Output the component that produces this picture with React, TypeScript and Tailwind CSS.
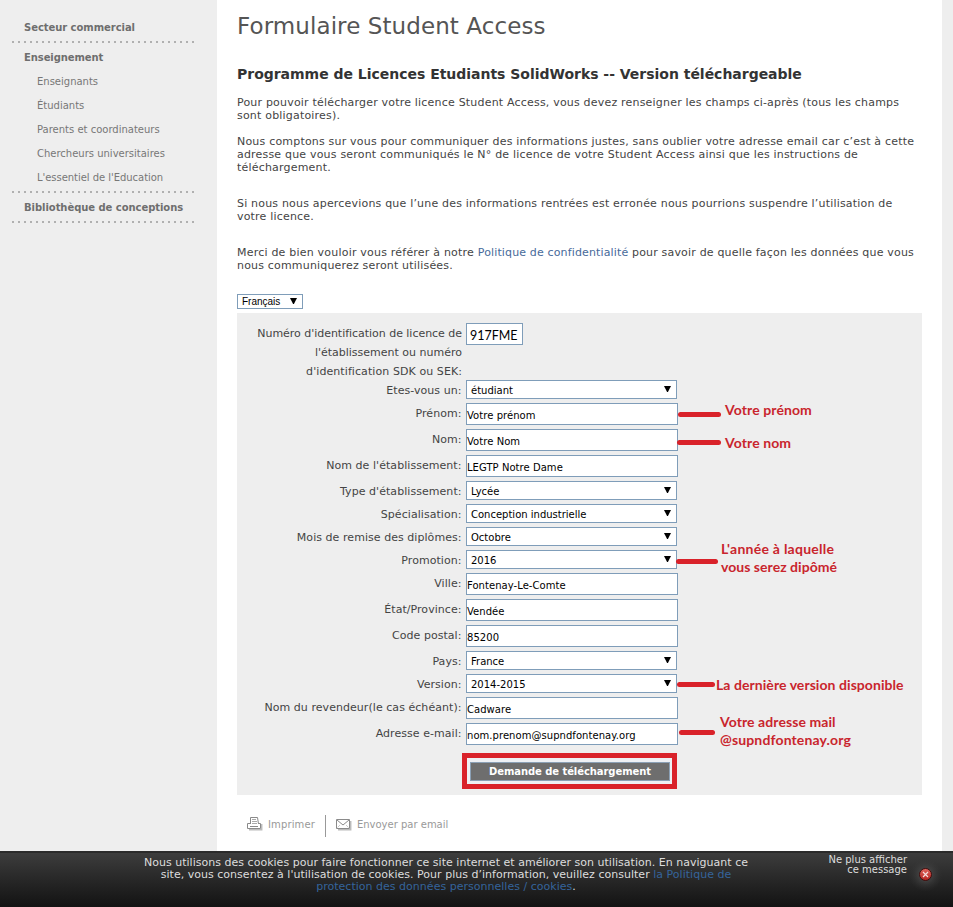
import type { ReactNode } from "react";

type Field = { label: string; value: string; kind: "select" | "input" };

const fields: Field[] = [
  { label: "Etes-vous un:", value: "étudiant", kind: "select" },
  { label: "Prénom:", value: "Votre prénom", kind: "input" },
  { label: "Nom:", value: "Votre Nom", kind: "input" },
  { label: "Nom de l'établissement:", value: "LEGTP Notre Dame", kind: "input" },
  { label: "Type d'établissement:", value: "Lycée", kind: "select" },
  { label: "Spécialisation:", value: "Conception industrielle", kind: "select" },
  { label: "Mois de remise des diplômes:", value: "Octobre", kind: "select" },
  { label: "Promotion:", value: "2016", kind: "select" },
  { label: "Ville:", value: "Fontenay-Le-Comte", kind: "input" },
  { label: "État/Province:", value: "Vendée", kind: "input" },
  { label: "Code postal:", value: "85200", kind: "input" },
  { label: "Pays:", value: "France", kind: "select" },
  { label: "Version:", value: "2014-2015", kind: "select" },
  { label: "Nom du revendeur(le cas échéant):", value: "Cadware", kind: "input" },
  { label: "Adresse e-mail:", value: "nom.prenom@supndfontenay.org", kind: "input" },
];

function Arrow() {
  return (
    <svg width="7" height="6" viewBox="0 0 7 6" className="shrink-0">
      <path d="M0 0h7L3.9 6h-.8z" fill="#000" />
    </svg>
  );
}

function Dots() {
  return (
    <svg width="184" height="2" className="ml-[11px] block">
      <line x1="1" y1="1" x2="184" y2="1" stroke="#b0b0b0" strokeWidth="2" strokeDasharray="2 4" />
    </svg>
  );
}

function Row({ label, value, kind }: Field) {
  return (
    <div className="mb-1 flex items-start">
      <div className="h-[19px] w-[225px] pt-px pr-[0.5px] text-right text-[11px] leading-[19px] tracking-[0.05px] whitespace-nowrap text-[#444]">
        {label}
      </div>
      {kind === "select" ? (
        <div className="ml-1 flex h-[19px] w-[211px] justify-between border border-[#7f9db9] bg-white pr-[5px] pl-1 text-[10px] leading-[19px] text-black">
          <span>{value}</span>
          <span className="pt-[5px] leading-none">
            <Arrow />
          </span>
        </div>
      ) : (
        <div className="ml-1 h-[22px] w-[212px] border border-[#7f9db9] bg-white pt-[2px] text-[10px] leading-[20px] tracking-[0.05px] whitespace-nowrap text-black">
          {value}
        </div>
      )}
    </div>
  );
}

/* Red marker line with its caption, laid over the form. */
function Note({ line, text, children }: { line: string; text: string; children: ReactNode }) {
  return (
    <>
      <div className={"absolute h-[5px] rounded-full bg-[#d9222a] " + line} />
      <div
        className={
          "absolute font-['Lato',sans-serif] text-[14px] leading-[18px] font-bold whitespace-nowrap text-[#c9252d] " + text
        }
      >
        {children}
      </div>
    </>
  );
}

export default function App() {
  return (
    <div className="flex h-[907px] w-[953px] flex-col overflow-hidden bg-[#eee] font-['DejaVu_Sans','Verdana',sans-serif]">
      <div className="flex h-[851px]">
        <nav className="w-[217px] text-[10px] leading-6 whitespace-nowrap text-[#777]">
          <div className="mt-[16px] ml-[24px] h-[25px] font-bold tracking-[-0.05px] text-[#6e6e6e]">Secteur commercial</div>
          <Dots />
          <div className="mt-[3px] ml-[24px] font-bold tracking-[-0.08px] text-[#6e6e6e]">Enseignement</div>
          <ul className="ml-[37px]">
            <li>Enseignants</li>
            <li>Étudiants</li>
            <li>Parents et coordinateurs</li>
            <li>Chercheurs universitaires</li>
            <li className="h-[25px] tracking-[-0.04px]">L'essentiel de l'Education</li>
          </ul>
          <Dots />
          <div className="mt-[3px] ml-[24px] h-[25px] font-bold tracking-[-0.05px] text-[#6e6e6e]">Bibliothèque de conceptions</div>
          <Dots />
        </nav>

        <main className="w-[725px] bg-white pl-[20px]">
          <h1 className="mt-[11px] h-[30px] text-[23px] leading-[30px] tracking-[0.09px] text-[#555]">
            Formulaire Student Access
          </h1>
          <h2 className="mt-[24px] h-[18px] text-[14px] leading-[18px] font-bold tracking-[-0.02px] whitespace-nowrap text-[#333]">
            Programme de Licences Etudiants SolidWorks -- Version téléchargeable
          </h2>
          <div className="mt-[13px] text-[11px] leading-[13px] tracking-[0.195px] whitespace-nowrap text-[#444]">
            <p>
              Pour pouvoir télécharger votre licence Student Access, vous devez renseigner les champs ci-après (tous les champs
              <br />
              sont obligatoires).
            </p>
            <p className="mt-[13px]">
              Nous comptons sur vous pour communiquer des informations justes, sans oublier votre adresse email car c’est à cette
              <br />
              <span className="tracking-[0.19px]">
                adresse que vous seront communiqués le N° de licence de votre Student Access ainsi que les instructions de
              </span>
              <br />
              téléchargement.
            </p>
            <p className="mt-[23px] tracking-[0.19px]">
              Si nous nous apercevions que l’une des informations rentrées est erronée nous pourrions suspendre l’utilisation de
              <br />
              votre licence.
            </p>
            <p className="mt-[23px] tracking-[0.18px]">
              <span className="tracking-[0.21px]">Merci de bien vouloir vous référer à notre </span>
              <a className="tracking-[0.14px] text-[#476a9a]">Politique de confidentialité</a> pour savoir de quelle façon les
              données que vous
              <br />
              nous communiquerez seront utilisées.
            </p>
          </div>

          <div className="mt-[22px] flex h-[15px] w-[66px] justify-between border border-[#7f9db9] bg-white pr-[5px] pl-1 font-['Liberation_Sans',Arial,sans-serif] text-[10px] leading-[14px] text-black">
            <span>Français</span>
            <span className="pt-[3px] leading-none">
              <Arrow />
            </span>
          </div>

          <section className="relative mt-1 h-[482px] w-[685px] bg-[#eee] pt-[10px]">
            <div className="flex h-[57px] items-start">
              <div className="w-[225px] pt-px text-right text-[11px] leading-[19px] whitespace-nowrap text-[#444]">
                <span className="tracking-[-0.03px]">Numéro d'identification de licence de</span>
                <br />
                l'établissement ou numéro
                <br />
                <span className="tracking-[0.08px]">d'identification SDK ou SEK:</span>
              </div>
              <div className="ml-1 h-[22px] w-[57px] border border-[#7f9db9] bg-white pt-px pl-[3px] font-['Lato',sans-serif] text-[14px] leading-[20px] text-black">
                <span className="inline-block origin-left scale-x-[0.89]">917FME</span>
              </div>
            </div>
            {fields.map((f) => (
              <Row key={f.label} {...f} />
            ))}

            <div className="mt-[8px] ml-[225px] h-[36px] w-[215px] border-[5px] border-[#d9222a] bg-[#eef0f4] pt-[4px] pl-[3px]">
              <div className="h-[19px] w-[200px] border border-[#8ba0b5] bg-[#6e6e6e] text-center text-[10px] leading-[17px] font-bold tracking-[-0.07px] text-white">
                Demande de téléchargement
              </div>
            </div>

            <Note line="top-[99px] left-[441px] w-[43px]" text="top-[88px] left-[488px] tracking-[0.1px]">
              Votre prénom
            </Note>
            <Note line="top-[127px] left-[440px] w-[44px]" text="top-[121px] left-[488px] tracking-[0.1px]">
              Votre nom
            </Note>
            <Note line="top-[246px] left-[439px] w-[42px]" text="top-[227px] left-[484px] tracking-[0.04px]">
              <span className="tracking-[0.25px]">L'année à laquelle</span>
              <br />
              vous serez dipômé
            </Note>
            <Note line="top-[369px] left-[440px] w-[38px]" text="top-[363px] left-[479px] tracking-[0.06px]">
              La dernière version disponible
            </Note>
            <Note line="top-[417px] left-[442px] w-[36px]" text="top-[400px] left-[483px] tracking-[0.14px]">
              <span className="tracking-[0.08px]">Votre adresse mail</span>
              <br />
              @supndfontenay.org
            </Note>
          </section>

          <div className="mt-[20px] flex h-[22px] text-[10px] leading-[19px] text-[#999]">
            <svg width="16" height="15" viewBox="0 0 16 15" className="mt-[2px] ml-[10px]" fill="none">
              <path d="M2 12.700h12.700V7" stroke="#bbb" strokeWidth="1.500" />
              <path d="M3.500 7V.500h7L11.500 7" stroke="#8a8a8a" />
              <path d="M5 2.500h4M5 4.500h5M5 6.500h5" stroke="#aaa" />
              <path d="M3 6.500H.500v5h13v-5H12M3 9.500h8" stroke="#8a8a8a" />
            </svg>
            <span className="ml-[5px] tracking-[0.12px]">Imprimer</span>
            <span className="ml-[10px] h-[22px] w-px bg-[#999]" />
            <svg width="16" height="12" viewBox="0 0 16 12" className="mt-[4px] ml-[10px]" fill="none">
              <path d="M2 10.700h12.700V2" stroke="#bbb" strokeWidth="1.500" />
              <path d="M.500.500h13v9H.500z" stroke="#8a8a8a" fill="#fff" />
              <path d="M1 1l6 5 6-5" stroke="#8a8a8a" />
              <path d="M1.500 8.500L4 6M12.500 8.500L10 6" stroke="#ccc" />
            </svg>
            <span className="ml-[5px] whitespace-nowrap">Envoyer par email</span>
          </div>
        </main>
      </div>

      <footer className="flex h-[56px] border-t-2 border-[#2b2b2b] bg-linear-to-b from-[#3d3d3d] to-[#131313] text-[#ddd]">
        <div className="ml-[136px] w-[620px] pt-[4px] text-center text-[11px] leading-[12px] tracking-[0.02px] whitespace-nowrap">
          Nous utilisons des cookies pour faire fonctionner ce site internet et améliorer son utilisation. En naviguant ce
          <br />
          site, vous consentez à l'utilisation de cookies. Pour plus d’information, veuillez consulter{" "}
          <a className="text-[#35649b]">la Politique de</a>
          <br />
          <a className="text-[#35649b]">protection des données personnelles / cookies</a>.
        </div>
        <div className="ml-[51px] w-[100px] pt-[2px] text-right text-[10px] leading-[10px] whitespace-nowrap">
          Ne plus afficher
          <br />
          ce message
        </div>
        <svg width="46" height="54" viewBox="0 0 46 54">
          <defs>
            <radialGradient id="halo">
              <stop offset="0.300" stopColor="#4a4a4a" stopOpacity="0.800" />
              <stop offset="1" stopColor="#333" stopOpacity="0" />
            </radialGradient>
            <linearGradient id="red" x1="0" y1="0" x2="0" y2="1">
              <stop offset="0" stopColor="#e0675f" />
              <stop offset="1" stopColor="#b3201d" />
            </linearGradient>
          </defs>
          <circle cx="18.500" cy="21.500" r="17" fill="url(#halo)" />
          <circle cx="18.500" cy="21.500" r="6" fill="url(#red)" stroke="#3c0d0d" />
          <path d="M16 19l5 5M21 19l-5 5" stroke="#f4dcdc" strokeWidth="1.200" />
        </svg>
      </footer>
    </div>
  );
}
